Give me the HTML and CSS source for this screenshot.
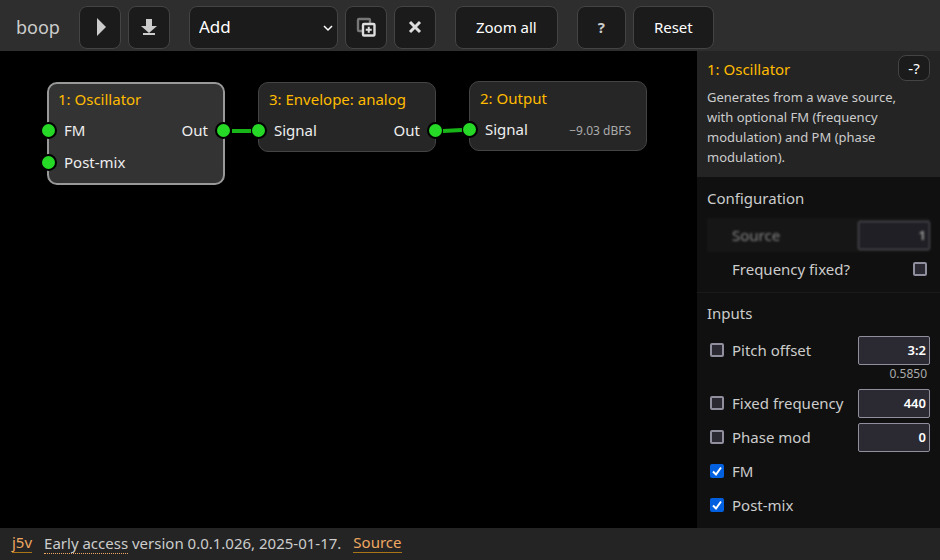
FILE: index.html
```html
<!DOCTYPE html>
<html lang="en">
<head>
<meta charset="utf-8">
<meta name="viewport" content="width=device-width, initial-scale=1">
<title>boop</title>
<link rel="stylesheet" href="styles.css">
</head>
<body>
<header class="toolbar">
  <h1 class="brand">boop</h1>
  <div class="group">
    <button class="btn icon" type="button" aria-label="Play">
      <svg width="20" height="20" viewBox="0 0 20 20"><path d="M7 1v18l9-9z" fill="#ccc"/></svg>
    </button>
    <button class="btn icon" type="button" aria-label="Download">
      <svg width="20" height="20" viewBox="0 0 20 20"><path d="M7 2h6v7h5l-8 7-8-7h5zM4 16h12v2H4z" fill="#ccc"/></svg>
    </button>
  </div>
  <div class="group">
    <span class="picker">
      <select class="btn add" aria-label="Add module"><option>Add</option></select>
      <svg class="chevron" width="10" height="8" viewBox="0 0 10 8"><path d="M1 2l4 4 4-4" fill="none" stroke="#fff" stroke-width="1.5"/></svg>
    </span>
    <button class="btn icon" type="button" aria-label="Duplicate">
      <svg width="20" height="20" viewBox="0 0 20 20" fill="none">
        <rect x="2" y="2" width="12" height="12" rx="1" stroke="#777" stroke-width="2.400"/>
        <rect x="7" y="7" width="11.500" height="11.500" rx="1" fill="#1b1b1b" stroke="#ddd" stroke-width="2.400"/>
        <path d="M12.750 9.750v6M9.750 12.750h6" stroke="#ddd" stroke-width="2"/>
      </svg>
    </button>
    <button class="btn icon" type="button" aria-label="Delete">
      <svg width="20" height="20" viewBox="0 0 20 20"><path d="M5 5l10 10M15 5L5 15" stroke="#ddd" stroke-width="3"/></svg>
    </button>
  </div>
  <div class="group"><button class="btn text" type="button">Zoom all</button></div>
  <div class="group">
    <button class="btn text help" type="button">?</button>
    <button class="btn text" type="button">Reset</button>
  </div>
</header>
<main class="workspace">
  <section class="canvas" aria-label="Patch">
    <article class="node osc">
      <h2>1: Oscillator</h2>
      <div class="ports"><i class="dot in"></i><span>FM</span><span>Out</span><i class="dot out"></i></div>
      <div class="ports"><i class="dot in"></i><span>Post-mix</span></div>
    </article>
    <article class="node env">
      <h2>3: Envelope: analog</h2>
      <div class="ports"><i class="dot in"></i><span>Signal</span><span>Out</span><i class="dot out"></i></div>
    </article>
    <article class="node output">
      <h2>2: Output</h2>
      <div class="ports"><i class="dot in"></i><span>Signal</span><span class="level">−9.03 dBFS</span></div>
    </article>
    <svg class="wires" width="660" height="200" viewBox="0 0 660 200"><path d="M232 80h19M443 80l19-1" stroke="#18b518" stroke-width="4"/></svg>
  </section>
  <aside class="panel">
    <section class="about">
      <div class="about-head"><h2>1: Oscillator</h2><button class="btn mini" type="button">-?</button></div>
      <p>Generates from a wave source, with optional FM (frequency modulation) and PM (phase modulation).</p>
    </section>
    <section class="config">
      <h3>Configuration</h3>
      <div class="row blurred"><label for="source">Source</label><input id="source" class="value" type="text" value="1"></div>
      <div class="row"><label for="fixed">Frequency fixed?</label><input id="fixed" class="check end" type="checkbox"></div>
    </section>
    <section class="inputs">
      <h3>Inputs</h3>
      <div class="row"><input id="c1" class="check" type="checkbox"><label for="c1">Pitch offset</label><input class="value" type="text" value="3:2" aria-label="Pitch offset value"></div>
      <div class="computed">0.5850</div>
      <div class="row"><input id="c2" class="check" type="checkbox"><label for="c2">Fixed frequency</label><input class="value" type="text" value="440" aria-label="Fixed frequency value"></div>
      <div class="row"><input id="c3" class="check" type="checkbox"><label for="c3">Phase mod</label><input class="value" type="text" value="0" aria-label="Phase mod value"></div>
      <div class="row"><input id="c4" class="check" type="checkbox" checked><label for="c4">FM</label></div>
      <div class="row"><input id="c5" class="check" type="checkbox" checked><label for="c5">Post-mix</label></div>
    </section>
  </aside>
</main>
<footer class="footer">
  <a href="#">j5v</a>
  <span><abbr>Early access</abbr> version 0.0.1.026, 2025-01-17.</span>
  <a href="#">Source</a>
</footer>
</body>
</html>
```
FILE: styles.css
```css
* { box-sizing: border-box; }
body {
  margin: 0;
  min-height: 100vh;
  display: flex;
  flex-direction: column;
  background: #000;
  color: #ccc;
  font: 15px/20px "Noto Sans", "Open Sans", sans-serif;
}
h1, h2, h3, p { margin: 0; font-weight: 400; }
h2, h3 { font-size: 15px; }
h2 { color: #fb0; }
button, input, select { font: inherit; color: inherit; margin: 0; }

.toolbar {
  display: flex;
  align-items: center;
  gap: 19px;
  height: 51px;
  padding: 3px 16px 0;
  background: #2e2e2e;
}
.brand { font-size: 18px; }
.group { display: flex; gap: 7px; }
.btn {
  height: 43px;
  border: 1px solid #444;
  border-radius: 8px;
  background: #1b1b1b;
  color: #fff;
}
.icon {
  width: 42px;
  padding: 0;
  display: grid;
  place-items: center;
}
.text { padding: 0 20px; }
.help { color: #ccc; font-weight: 700; }
.picker { position: relative; display: flex; }
.add {
  width: 149px;
  padding: 0 9px;
  appearance: none;
  font-size: 17px;
}
.chevron { position: absolute; right: 5px; top: 18px; pointer-events: none; }

.workspace { flex: 1; display: flex; }
.canvas { position: relative; flex: 1; }
.wires { position: absolute; left: 0; top: 0; pointer-events: none; }
.node {
  position: absolute;
  width: 178px;
  padding: 4px 0 5px;
  border: 1px solid #444;
  border-radius: 10px;
  background: #262626;
  color: #eee;
}
.node h2 { padding: 0 10px 2px; line-height: 25px; }
.osc { left: 47px; top: 31px; padding: 3px 0 5px; border: 2px solid #999; background: #333; }
.osc h2 { padding: 0 9px 2px; }
.env { left: 258px; top: 31px; }
.output { left: 469px; top: 30px; }
.ports {
  position: relative;
  display: flex;
  justify-content: space-between;
  align-items: center;
  height: 32px;
  padding: 0 15px;
}
.dot {
  position: absolute;
  width: 17px;
  height: 17px;
  border: 2px solid #000;
  border-radius: 50%;
  background: #26d926;
}
.dot.in { left: -9px; }
.dot.out { right: -9px; }
.level { padding-top: 4px; color: #aaa; font-size: 12px; }

.panel { width: 243px; background: #101010; }
.about { padding: 4px 10px 10px; background: #242424; }
.about-head { display: flex; justify-content: space-between; height: 32px; }
.about-head h2 { line-height: 28px; }
.mini { width: 32px; height: 26px; padding: 0; line-height: 20px; }
.about p { padding-right: 20px; font-size: 13px; }
.config { padding: 11px 10px 6px; border-bottom: 1px solid #1a1a1a; }
.inputs { padding: 10px 10px 5px; }
h3 { margin-bottom: 10px; }
.row { display: flex; align-items: center; height: 34px; }
.config label { margin-left: 25px; }
.check {
  width: 14px;
  height: 14px;
  margin: 0 8px 0 3px;
  appearance: none;
  border: 2px solid #8f8f9d;
  border-radius: 2px;
  background: #2b2a33;
}
.check:checked {
  border: 0;
  background: #0060df url("data:image/svg+xml,%3Csvg xmlns='http://www.w3.org/2000/svg' viewBox='0 0 14 14'%3E%3Cpath d='M3 7.500l3 3 5-7' fill='none' stroke='white' stroke-width='2'/%3E%3C/svg%3E");
}
.check.end { margin: 0 3px 0 auto; }
.value {
  width: 72px;
  height: 29px;
  margin-left: auto;
  padding: 0 3px;
  border: 1px solid #8f8f9d;
  border-radius: 2px;
  background: #2b2a33;
  color: #fff;
  font-size: 13px;
  font-weight: 600;
  text-align: right;
}
.blurred { background: #1b1b1b; filter: blur(1px); opacity: .6; }
.computed { height: 19px; padding-right: 3px; color: #aaa; font-size: 12px; line-height: 13px; text-align: right; }

.footer {
  display: flex;
  align-items: center;
  gap: 12px;
  height: 32px;
  padding: 0 12px 2px;
  background: #242424;
}
.footer a { color: #efa862; text-decoration: none; border-bottom: 1px solid #a87616; line-height: 19px; }
.footer abbr { border-bottom: 1px dotted #efa862; }
```
